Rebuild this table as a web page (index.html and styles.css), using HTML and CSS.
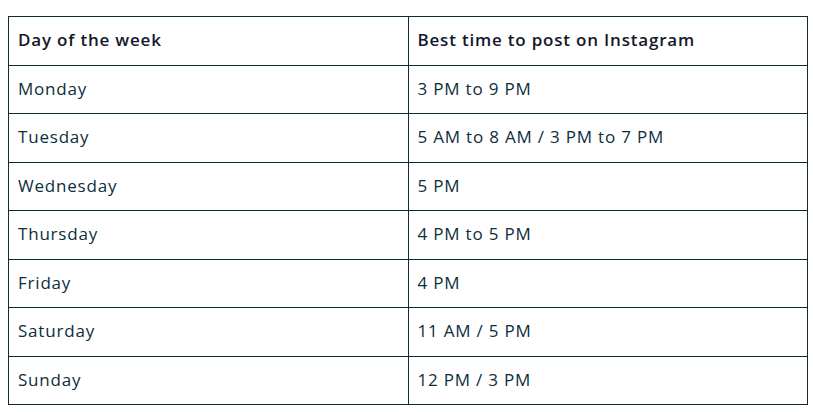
FILE: index.html
```html
<!DOCTYPE html>
<html>
<head>
<meta charset="utf-8">
<link rel="stylesheet" href="styles.css">
</head>
<body>
<table class="times">
  <thead>
    <tr><th>Day of the week</th><th>Best time to post on Instagram</th></tr>
  </thead>
  <tbody>
    <tr><td>Monday</td><td>3 PM to 9 PM</td></tr>
    <tr><td>Tuesday</td><td>5 AM to 8 AM / 3 PM to 7 PM</td></tr>
    <tr><td>Wednesday</td><td>5 PM</td></tr>
    <tr><td>Thursday</td><td>4 PM to 5 PM</td></tr>
    <tr><td>Friday</td><td>4 PM</td></tr>
    <tr><td>Saturday</td><td>11 AM / 5 PM</td></tr>
    <tr><td>Sunday</td><td>12 PM / 3 PM</td></tr>
  </tbody>
</table>
</body>
</html>
```
FILE: styles.css
```css
html, body { background: #fff; }
body {
  margin: 16px 0 0 8px;
  font-family: "Open Sans", "Noto Sans", sans-serif;
}
.times {
  border-collapse: collapse;
  width: 800px;
  table-layout: fixed;
}
.times th, .times td {
  border: 1px solid #0e2b36;
  height: 48.5px;
  padding: 0 0 2px 9px;
  text-align: left;
  vertical-align: middle;
  font-size: 17px;
  letter-spacing: 0.8px;
  box-sizing: border-box;
}
.times th {
  font-weight: 600;
  color: #14182a;
}
.times td {
  font-weight: 400;
  color: #0c2e3c;
}
```
